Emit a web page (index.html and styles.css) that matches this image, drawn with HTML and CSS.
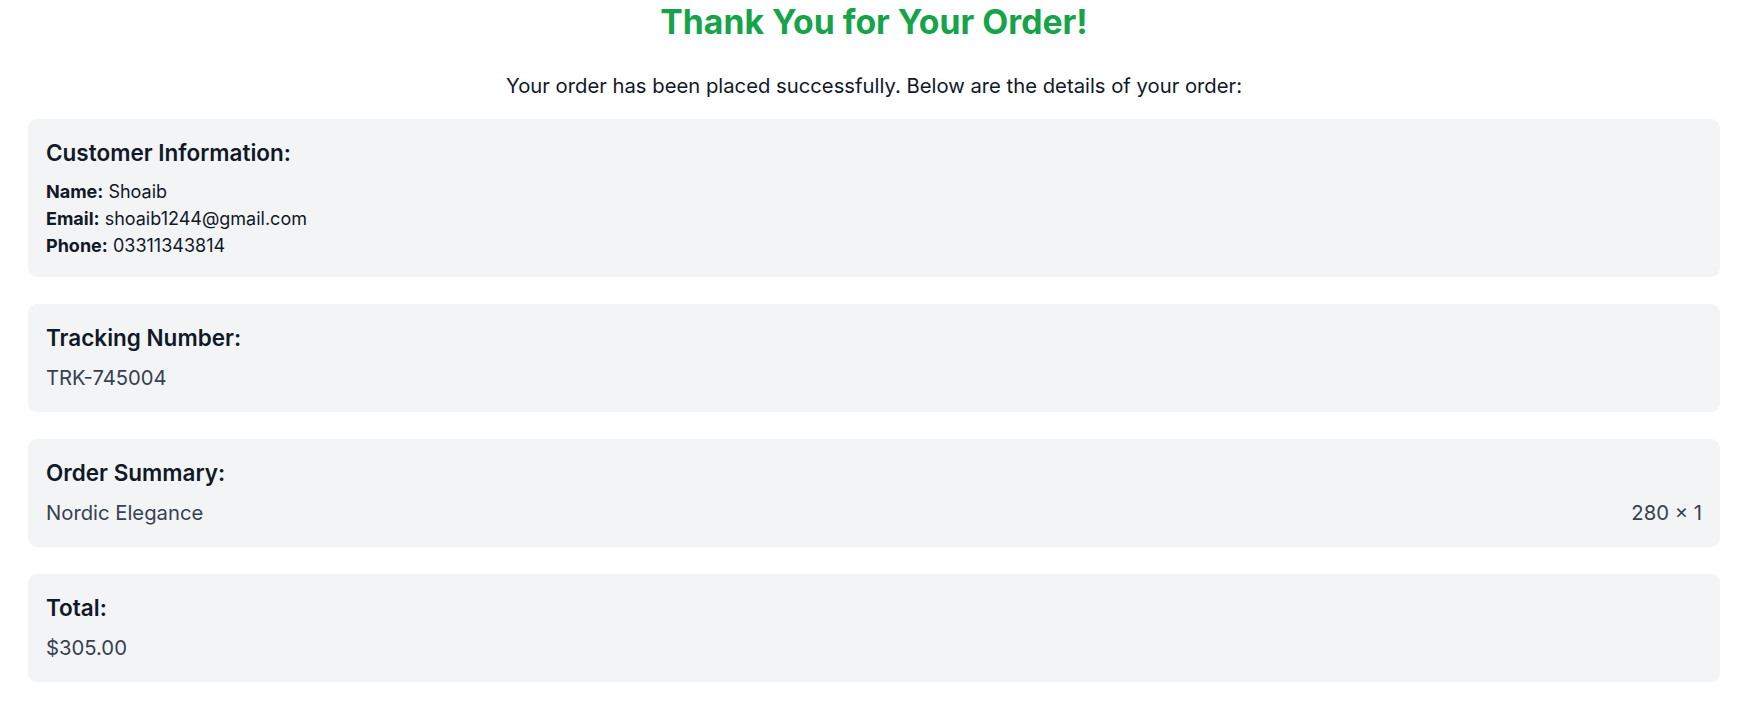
FILE: index.html
```html
<!DOCTYPE html>
<html lang="en">
<head>
<meta charset="utf-8">
<title>Order Confirmation</title>
<link rel="stylesheet" href="styles.css">
</head>
<body>
<main class="page">
  <h1 class="title">Thank You for Your Order!</h1>
  <p class="lead">Your order has been placed successfully. Below are the details of your order:</p>

  <section class="card">
    <h2 class="card-title">Customer Information:</h2>
    <div class="info">
      <p><strong>Name:</strong> Shoaib</p>
      <p><strong>Email:</strong> shoaib1244@gmail.com</p>
      <p><strong>Phone:</strong> 03311343814</p>
    </div>
  </section>

  <section class="card">
    <h2 class="card-title">Tracking Number:</h2>
    <p class="value">TRK-745004</p>
  </section>

  <section class="card">
    <h2 class="card-title">Order Summary:</h2>
    <div class="row value">
      <span>Nordic Elegance</span>
      <span>280 × 1</span>
    </div>
  </section>

  <section class="card">
    <h2 class="card-title">Total:</h2>
    <p class="value">$305.00</p>
  </section>
</main>
</body>
</html>
```

FILE: styles.css
```css
* {
  box-sizing: border-box;
}

html, body {
  margin: 0;
  padding: 0;
  background: #ffffff;
}

body {
  font-family: Inter, "Noto Sans", "Liberation Sans", sans-serif;
  color: #111827;
}

.page {
  padding: 2px 30px 0 28px;
}

.title {
  margin: 0 0 27px;
  font-size: 33.75px;
  line-height: 40.5px;
  font-weight: 700;
  color: #16a34a;
  text-align: center;
}

.lead {
  margin: 0 0 18px;
  font-size: 20.25px;
  line-height: 31.5px;
  text-align: center;
  color: #111827;
}

.card {
  background: #f3f4f6;
  border-radius: 9px;
  padding: 18px;
  margin-bottom: 27px;
}

.card-title {
  margin: 0 0 9px;
  font-size: 22.5px;
  line-height: 31.5px;
  font-weight: 600;
  color: #111827;
}

.info p {
  margin: 0;
  font-size: 18px;
  line-height: 27px;
  color: #111827;
}

.info strong {
  font-weight: 700;
}

.value {
  margin: 0;
  font-size: 20.25px;
  line-height: 31.5px;
  color: #374151;
}

.row {
  display: flex;
  justify-content: space-between;
}
```
